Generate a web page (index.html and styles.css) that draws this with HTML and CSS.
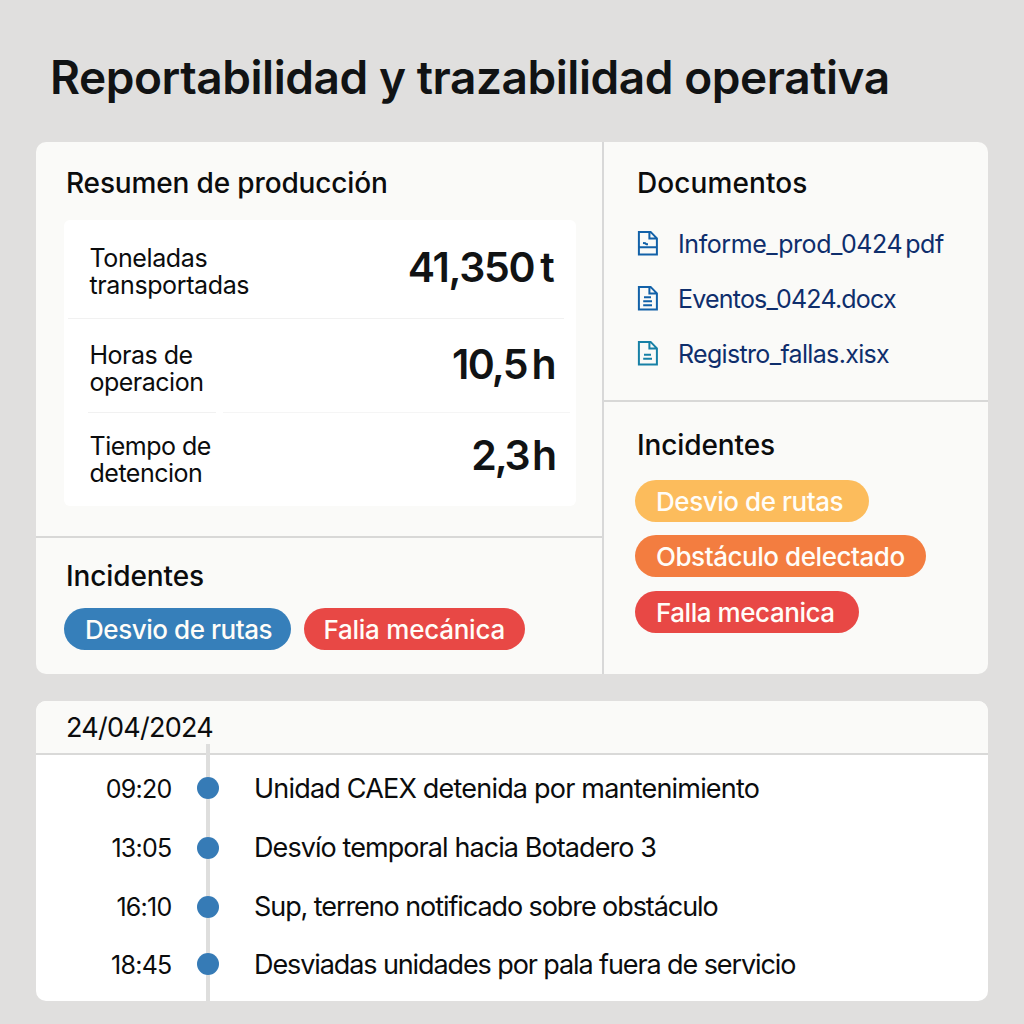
FILE: index.html
```html
<!DOCTYPE html>
<html lang="es">
<head>
<meta charset="utf-8">
<title>Reportabilidad y trazabilidad operativa</title>
<link rel="stylesheet" href="styles.css">
</head>
<body>
<h1 class="page-title">Reportabilidad y trazabilidad operativa</h1>

<main class="board">
  <div class="column column-main">
    <section class="panel production">
      <h2 class="heading">Resumen de producción</h2>
      <div class="metrics">
        <div class="metric metric-tons">
          <div class="metric-label">Toneladas<br>transportadas</div>
          <div class="metric-value">41,350 t</div>
        </div>
        <div class="metric metric-hours">
          <div class="metric-label">Horas de<br>operacion</div>
          <div class="metric-value">10,5 h</div>
        </div>
        <div class="metric metric-stops">
          <div class="metric-label">Tiempo de<br>detencion</div>
          <div class="metric-value">2,3 h</div>
        </div>
      </div>
    </section>
    <section class="panel incidents">
      <h2 class="heading">Incidentes</h2>
      <div class="tags">
        <span class="tag tag-blue">Desvio de rutas</span>
        <span class="tag tag-red tag-failure">Falia mecánica</span>
      </div>
    </section>
  </div>

  <div class="column column-side">
    <section class="panel documents">
      <h2 class="heading">Documentos</h2>
      <ul class="files">
        <li class="file file-pdf">
          <svg class="file-icon" viewBox="0 0 22 26"><path d="M1.9 1.9H13.6L19.9 8.4V24.6H1.9ZM12.4 2V8.6H19.6M2 17.2H20M6 13L8.2 13.2L9.4 14.2H11"/></svg>
          <span>Informe_prod_0424<span class="extension">pdf</span></span>
        </li>
        <li class="file file-docx">
          <svg class="file-icon" viewBox="0 0 22 26"><path d="M1.9 1.9H13.6L19.9 8.4V24.6H1.9ZM12.4 2V8.6H19.6M7 12.2H14M6.2 16.2H15M6.2 20.2H15"/></svg>
          <span>Eventos_0424.docx</span>
        </li>
        <li class="file file-xlsx">
          <svg class="file-icon" viewBox="0 0 22 26"><path d="M1.9 1.9H13.6L19.9 8.4V24.6H1.9ZM12.4 2V8.6H19.6M7 14.7H14M6.2 18.7H15"/></svg>
          <span>Registro_fallas.xisx</span>
        </li>
      </ul>
    </section>
    <section class="panel alerts">
      <h2 class="heading">Incidentes</h2>
      <div class="tags tags-stacked">
        <span class="tag tag-yellow">Desvio de rutas</span>
        <span class="tag tag-orange">Obstáculo delectado</span>
        <span class="tag tag-red">Falla mecanica</span>
      </div>
    </section>
  </div>
</main>

<section class="log">
  <header class="log-date">24/04/2024</header>
  <ol class="timeline">
    <li class="entry entry-first"><time>09:20</time><i class="dot"></i><span>Unidad CAEX detenida por mantenimiento</span></li>
    <li class="entry entry-second"><time>13:05</time><i class="dot"></i><span>Desvío temporal hacia Botadero 3</span></li>
    <li class="entry entry-third"><time>16:10</time><i class="dot"></i><span>Sup, terreno notificado sobre obstáculo</span></li>
    <li class="entry entry-fourth"><time>18:45</time><i class="dot"></i><span>Desviadas unidades por pala fuera de servicio</span></li>
  </ol>
</section>
</body>
</html>
```
FILE: styles.css
```css
* { box-sizing: border-box; }

body {
  margin: 0;
  height: 1024px;
  padding: 49px 36px 0;
  background: #e0dfde;
  color: #0b0c0d;
  font-family: Inter, "Liberation Sans", sans-serif;
  overflow: hidden;
}

h1, h2, ul, ol { margin: 0; padding: 0; list-style: none; }

.page-title {
  height: 93px;
  padding-left: 14px;
  font-size: 46px;
  font-weight: 600;
  line-height: 56px;
  letter-spacing: -0.44px;
  color: #111314;
  white-space: nowrap;
}

.board {
  display: grid;
  grid-template-columns: 568px 1fr;
  height: 532px;
  background: #fafaf8;
  border-radius: 10px;
  overflow: hidden;
}

.column { display: grid; }
.column-main { grid-template-rows: 396px 1fr; border-right: 2px solid #d8d8d8; }
.column-side { grid-template-rows: 260px 1fr; }

.heading { font-size: 28px; font-weight: 500; line-height: 34px; white-space: nowrap; }

.production { padding: 24px 26px 0 28px; border-bottom: 2px solid #d8d8d7; }
.production .heading { padding-left: 2px; letter-spacing: -0.15px; }
.incidents .heading { padding-left: 2px; }

.metrics {
  height: 286px;
  margin-top: 20px;
  background: #fff;
  border-radius: 6px;
}
.metric {
  display: flex;
  justify-content: space-between;
  align-items: flex-start;
  padding: 0 21px 0 25.5px;
  background-repeat: no-repeat;
}
.metric-tons { height: 99px; padding-top: 24px; padding-right: 22.5px; background-image: linear-gradient(#f1f1f1, #f1f1f1); background-size: 496px 2px; background-position: 4px 98px; }
.metric-hours { height: 94px; padding-top: 22px; background-image: linear-gradient(#f1f1f1, #f1f1f1), linear-gradient(#f5f5f5, #f5f5f5); background-size: 128px 1px, 347px 1px; background-position: 24px 93px, 159px 93px; }
.metric-stops { padding-top: 19px; }
.metric-label { padding-top: 1px; font-size: 25px; line-height: 26.5px; letter-spacing: -0.38px; }
.metric-hours .metric-label, .metric-stops .metric-label { letter-spacing: -0.5px; }
.metric-value { font-size: 41px; font-weight: 600; line-height: 46px; letter-spacing: -1.3px; word-spacing: -3px; color: #111314; }
.metric-hours .metric-value { letter-spacing: -1.7px; word-spacing: -4px; }
.metric-stops .metric-value { letter-spacing: -2.2px; word-spacing: -4.5px; }

.incidents { padding: 21px 28px 0; }
.tags { display: flex; gap: 13px; margin-top: 15px; }
.tags-stacked { flex-direction: column; align-items: flex-start; margin-top: 18px; gap: 13.3px; }
.tag {
  height: 42px;
  padding: 0 0 0 21px;
  border-radius: 21px;
  font-size: 26px;
  font-weight: 500;
  line-height: 44px;
  letter-spacing: -0.45px;
  color: #fffdf8;
  white-space: nowrap;
}
.tag-blue { background: #367fba; width: 227px; }
.tag-red { background: #e84845; }
.tag-yellow { background: #fcbc5c; width: 234px; }
.tag-orange { background: #f37d40; width: 291px; }
.alerts .tag-red { width: 224px; }
.tag-failure { width: 221px; padding-left: 19.5px; letter-spacing: -0.25px; }

.documents { padding: 24px 0 0 33px; border-bottom: 2px solid #d8d8d7; }
.documents .heading { letter-spacing: 0.1px; }
.files { margin-top: 15px; }
.file { display: flex; align-items: center; gap: 19px; height: 55.4px; font-size: 25px; color: #0e2e6c; white-space: nowrap; }
.file > span { padding-top: 1px; }
.file-pdf > span { padding-top: 2px; }
.file-icon { width: 22px; height: 26px; fill: none; stroke: #1261a8; stroke-width: 2; }
.file-pdf { letter-spacing: -0.42px; }
.file-docx { letter-spacing: -0.79px; }
.file-xlsx { letter-spacing: -0.67px; }
.file-xlsx .file-icon { stroke: #1780a6; }
.extension { margin-left: 3px; }

.alerts { padding: 26px 0 0 31px; }
.alerts .heading { padding-left: 2px; }
.alerts .heading, .incidents .heading { letter-spacing: -0.1px; }

.log {
  height: 300px;
  margin-top: 27px;
  background: #fff;
  border-radius: 10px;
  overflow: hidden;
}
.log-date {
  height: 54px;
  padding: 10px 30px 0;
  background: #fafaf8;
  border-bottom: 2px solid #d9d9d8;
  font-size: 27px;
  line-height: 34px;
  letter-spacing: -0.75px;
}
.timeline {
  height: 257px;
  margin-top: -11px;
  padding-top: 14.5px;
  background: linear-gradient(#dededd, #dededd) 170px 0 / 4px 100% no-repeat;
}
.entry { display: grid; grid-template-columns: 135.5px 50.5px 1fr; align-items: center; font-size: 27px; white-space: nowrap; }
.entry time { padding-top: 1px; font-size: 25px; letter-spacing: -0.75px; text-align: right; }
.entry > span { padding-left: 32px; }
.dot { width: 22px; height: 22px; margin-left: 25.5px; border-radius: 50%; background: #367bb6; }
.entry-first { height: 59px; letter-spacing: -0.8px; }
.entry-second { height: 60px; letter-spacing: -0.92px; }
.entry-third { height: 58px; letter-spacing: -1.08px; }
.entry-fourth { height: 57px; letter-spacing: -1.1px; }
```
